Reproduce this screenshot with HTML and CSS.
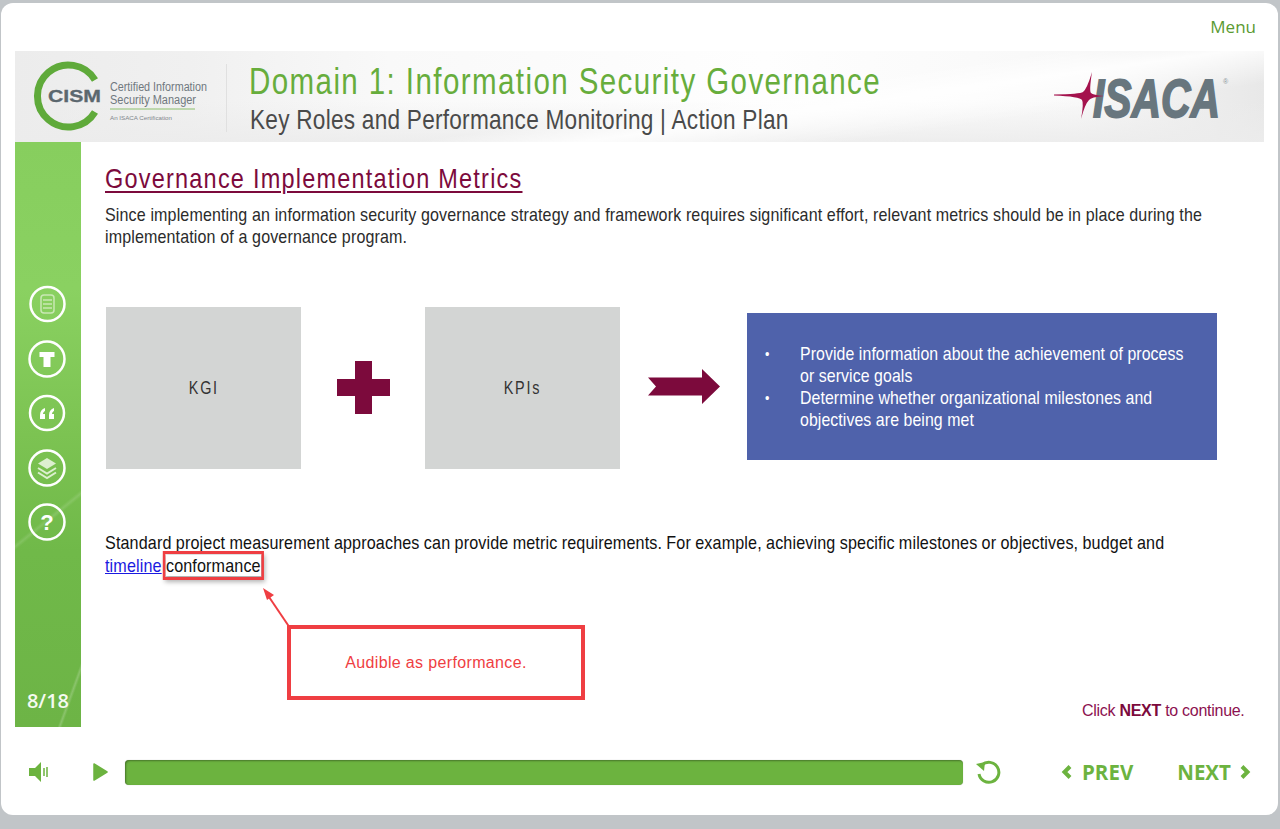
FILE: index.html
```html
<!DOCTYPE html>
<html lang="en">
<head>
    <meta charset="UTF-8">
    <meta name="viewport" content="width=device-width, initial-scale=1.0">
    <title>Governance Implementation Metrics</title>
    <link rel="stylesheet" href="styles.css">
</head>
<body>

    <div class="card">
        <div class="menu-row"><span class="menu">Menu</span></div>

        <!-- Banner -->
        <div class="banner">
            <svg class="cism-logo" width="180" height="91" viewBox="0 0 180 91">
                <path d="M 65 29 A 31 31 0 1 0 65 61" fill="none" stroke="#5faa3a" stroke-width="7"/>
                <text x="18" y="51" class="cism-word" textLength="53" lengthAdjust="spacingAndGlyphs">CISM</text>
                <text x="80" y="40" class="cism-line" textLength="97" lengthAdjust="spacingAndGlyphs">Certified Information</text>
                <text x="80" y="53" class="cism-line" textLength="86" lengthAdjust="spacingAndGlyphs">Security Manager</text>
                <line x1="80" y1="58" x2="165" y2="58" stroke="#8cbf6c" stroke-width="1"/>
                <text x="80" y="69" class="cism-small" textLength="62" lengthAdjust="spacingAndGlyphs">An ISACA Certification</text>
            </svg>
            <div class="banner-titles">
                <h1>Domain 1: Information Security Governance</h1>
                <p>Key Roles and Performance Monitoring | Action Plan</p>
            </div>
            <svg class="isaca-logo" width="176" height="50" viewBox="0 0 176 50">
                <text x="39" y="46" class="isaca-word" textLength="127" lengthAdjust="spacingAndGlyphs">ISACA</text>
                <text x="169" y="13" class="isaca-reg">®</text>
                <path d="M 0 23.500 Q 26 23 29 21 Q 33 18 38 1 Q 35 20 37 22 Q 39 24 50 25 Q 37 26 35 29 Q 31 33 27 48 Q 30 32 28 29 Q 26 25.500 0 24.500 Z" fill="#a4124d"/>
            </svg>
        </div>

        <div class="middle">
            <!-- Barra lateral -->
            <div class="sidebar">
                <svg class="side-icon" width="38" height="38" viewBox="0 0 38 38">
                    <circle cx="19.500" cy="19" r="17" class="ring"/>
                    <rect x="13" y="10" width="13" height="18" rx="3" fill="none" stroke="#c9e8b4" stroke-width="1.500"/>
                    <path d="M 15 15 H 24 M 15 19 H 24 M 15 23 H 24" stroke="#c9e8b4" stroke-width="1.500"/>
                </svg>
                <svg class="side-icon" width="38" height="38" viewBox="0 0 38 38">
                    <circle cx="19" cy="19" r="17.500" class="ring"/>
                    <path d="M 11.500 12 H 26.500 V 17 H 22.500 V 27 H 15.500 V 17 H 11.500 Z" fill="#fff"/>
                </svg>
                <svg class="side-icon" width="38" height="38" viewBox="0 0 38 38">
                    <circle cx="19" cy="19" r="17" class="ring"/>
                    <path d="M 17 14 C 14 15 12 17.500 12 21 V 25 H 17 V 20 H 15 C 15 18.500 16 17.500 17 17 Z M 26 14 C 23 15 21 17.500 21 21 V 25 H 26 V 20 H 24 C 24 18.500 25 17.500 26 17 Z" fill="#fff"/>
                </svg>
                <svg class="side-icon" width="38" height="38" viewBox="0 0 38 38">
                    <circle cx="19" cy="19" r="17.500" class="ring"/>
                    <path d="M 19 9 L 28 14.500 L 19 20 L 10 14.500 Z" fill="#dcefcf"/>
                    <path d="M 10 19 L 19 24.500 L 28 19 M 10 23.500 L 19 29 L 28 23.500" fill="none" stroke="#dcefcf" stroke-width="2"/>
                </svg>
                <svg class="side-icon" width="38" height="38" viewBox="0 0 38 38">
                    <circle cx="19" cy="19" r="17.500" class="ring"/>
                    <text x="19" y="27" class="help-mark">?</text>
                </svg>
                <div class="count">8/18</div>
            </div>

            <!-- Contenido -->
            <div class="content">
                <h2>Governance Implementation Metrics</h2>
                <p class="intro">Since implementing an information security governance strategy and framework requires significant effort, relevant metrics should be in place during the implementation of a governance program.</p>

                <div class="diagram">
                    <div class="grey-box"><span>KGI</span></div>
                    <svg class="plus" width="53" height="53" viewBox="0 0 53 53">
                        <path d="M 18 0 H 35 V 18 H 53 V 35 H 35 V 53 H 18 V 35 H 0 V 18 H 18 Z" fill="#7c0a3c"/>
                    </svg>
                    <div class="grey-box"><span>KPIs</span></div>
                    <svg class="arrow" width="72" height="35" viewBox="0 0 72 35">
                        <path d="M 0 8.500 H 54 V 0 L 72 17.500 L 54 35 V 26.500 H 0 L 8 17.500 Z" fill="#7c0a3c"/>
                    </svg>
                    <div class="blue-box">
                        <ul>
                            <li>Provide information about the achievement of process or service goals</li>
                            <li>Determine whether organizational milestones and objectives are being met</li>
                        </ul>
                    </div>
                </div>

                <p class="outro">Standard project measurement approaches can provide metric requirements. For example, achieving specific milestones or objectives, budget and <a href="#">timeline</a> <span class="flagged">conformance</span></p>

                <svg class="callout-line" width="40" height="50" viewBox="0 0 40 50">
                    <path d="M 29 42 L 6 8" stroke="#ef3e42" stroke-width="2"/>
                    <path d="M 2 2 L 13 9 L 6 14 Z" fill="#ef3e42"/>
                </svg>
                <div class="callout">Audible as performance.</div>
                <div class="next-hint">Click <b>NEXT</b> to continue.</div>
            </div>
        </div>

        <!-- Controles -->
        <div class="controls">
            <svg class="speaker" width="20" height="22" viewBox="0 0 20 22">
                <path d="M 0 7 H 6 L 12 1 V 21 L 6 15 H 0 Z" fill="#6cb33f"/>
                <path d="M 15 7 V 15 M 18 6 V 16" stroke="#6cb33f" stroke-width="1.500"/>
            </svg>
            <svg class="play" width="15" height="18" viewBox="0 0 15 18">
                <path d="M 1 1 L 14 9 L 1 17 Z" fill="#6cb33f" stroke="#6cb33f" stroke-width="1.500" stroke-linejoin="round"/>
            </svg>
            <div class="progress"></div>
            <svg class="reload" width="26" height="26" viewBox="0 0 26 26">
                <path d="M 7 6 A 10 10 0 1 1 4 15" fill="none" stroke="#6cb33f" stroke-width="3"/>
                <path d="M 1 5 L 10 3 L 9 12 Z" fill="#6cb33f"/>
            </svg>
            <div class="nav-btn prev">
                <svg width="11" height="14" viewBox="0 0 11 14"><path d="M 9 1.500 L 3.500 7 L 9 12.500" fill="none" stroke="#6cb33f" stroke-width="4"/></svg>
                PREV
            </div>
            <div class="nav-btn next">
                NEXT
                <svg width="11" height="14" viewBox="0 0 11 14"><path d="M 2 1.500 L 7.500 7 L 2 12.500" fill="none" stroke="#6cb33f" stroke-width="4"/></svg>
            </div>
        </div>
    </div>

</body>
</html>
```

FILE: styles.css
```css
/* Marco general */
html, body {
    margin: 0;
    padding: 0;
    height: 829px;
    overflow: hidden;
}
body {
    background-color: #c1c5c8;
    font-family: "Liberation Sans", Arial, sans-serif;
}
.card {
    margin: 3px 2px 0 1px;
    height: 812px;
    box-sizing: border-box;
    padding: 0 14px 0 14px;
    background-color: #fff;
    border-radius: 12px;
    display: flex;
    flex-direction: column;
}
.menu-row {
    height: 48px;
    display: flex;
    justify-content: flex-end;
    align-items: flex-start;
    padding-right: 8px;
}
.menu {
    margin-top: 13px;
    font-family: "Open Sans", sans-serif;
    font-size: 17px;
    line-height: 22px;
    color: #5a9a32;
}

/* Banner */
.banner {
    height: 91px;
    width: 1249px;
    flex: none;
    display: flex;
    position: relative;
    background:
        linear-gradient(172deg, rgba(255,255,255,0) 55%, rgba(255,255,255,0.85) 64%, rgba(255,255,255,0) 78%),
        linear-gradient(180deg, rgba(236,236,236,0) 55%, rgba(236,236,236,0.9) 100%),
        linear-gradient(90deg, #ececec 0%, #f0f0f0 14%, #f9f9f9 30%, #fefefe 60%, #f8f8f8 85%, #e8e8e8 100%);
}
.cism-logo {
    flex: none;
    margin-left: 15px;
    width: 180px;
}
.cism-word {
    font-weight: bold;
    font-size: 17px;
    fill: #5b676e;
    stroke: #5b676e;
    stroke-width: 0.300;
}
.cism-line {
    font-size: 12.500px;
    fill: #6f787e;
}
.cism-small {
    font-size: 5.500px;
    fill: #80878c;
}
.banner-titles {
    margin-left: 16px;
    margin-top: 13px;
    padding-left: 22px;
    height: 68px;
    border-left: 1px solid #e0e0e0;
}
.banner-titles h1 {
    margin: 0;
    font-size: 36px;
    line-height: 36px;
    font-weight: normal;
    letter-spacing: 1.720px;
    color: #67ad3c;
    white-space: nowrap;
    transform: scaleX(0.82);
    transform-origin: left;
}
.banner-titles p {
    margin: 4px 0 0 1px;
    font-size: 28px;
    line-height: 32px;
    letter-spacing: 0.300px;
    color: #4a4a4a;
    white-space: nowrap;
    transform: scaleX(0.808);
    transform-origin: left;
}
.isaca-logo {
    position: absolute;
    left: 1039px;
    top: 20px;
}
.isaca-word {
    font-weight: bold;
    font-style: italic;
    font-size: 53px;
    fill: #68767e;
    stroke: #68767e;
    stroke-width: 1.800;
}
.isaca-reg {
    font-size: 7px;
    fill: #8a959b;
}

/* Barra lateral */
.middle {
    height: 585px;
    flex: none;
    display: flex;
}
.sidebar {
    width: 66px;
    flex: none;
    display: flex;
    flex-direction: column;
    align-items: center;
    padding-top: 143px;
    box-sizing: border-box;
    background:
        linear-gradient(110deg, rgba(255,255,255,0) 91.500%, rgba(255,255,255,0.2) 92.300%, rgba(255,255,255,0) 93.200%),
        linear-gradient(141deg, rgba(255,255,255,0) 62.800%, rgba(255,255,255,0.12) 63.400%, rgba(255,255,255,0) 64%),
        linear-gradient(180deg, #87ce5e 0%, #8ad161 25%, #7cc352 50%, #70b949 70%, #6db446 100%);
}
.side-icon {
    display: block;
    margin: 0 3px 16.500px 0;
}
.ring {
    fill: none;
    stroke: #fff;
    stroke-width: 2.500;
}
.help-mark {
    font-weight: bold;
    font-size: 22px;
    text-anchor: middle;
    fill: #fff;
}
.count {
    margin-top: auto;
    margin-bottom: 13px;
    font-family: "Open Sans", sans-serif;
    font-weight: 600;
    font-size: 20px;
    line-height: 26px;
    color: #f6faf1;
}

/* Contenido */
.content {
    flex: 1;
    padding-left: 24px;
    position: relative;
    min-width: 0;
}
.content h2 {
    margin: 21px 0 0 0;
    font-size: 28px;
    line-height: 31px;
    font-weight: normal;
    letter-spacing: 1.450px;
    color: #7c0a3c;
    text-decoration: underline;
    text-decoration-thickness: 2px;
    text-underline-offset: 3px;
    white-space: nowrap;
    transform: scaleX(0.839);
    transform-origin: left;
}
.intro, .outro {
    margin: 0;
    width: 1306px;
    font-size: 19px;
    letter-spacing: 0.150px;
    color: #2b2b2b;
    transform-origin: left;
}
.intro {
    margin-top: 10px;
    line-height: 22px;
    transform: scaleX(0.845);
}
.diagram {
    margin: 59px 0 0 1px;
    height: 162px;
    display: flex;
    align-items: center;
}
.grey-box {
    width: 195px;
    height: 162px;
    flex: none;
    display: flex;
    align-items: center;
    justify-content: center;
    background-color: #d3d5d4;
    font-size: 18px;
    letter-spacing: 2.200px;
    color: #333;
}
.grey-box span {
    display: inline-block;
    transform: scaleX(0.8);
}
.plus {
    flex: none;
    margin: 0 35px 2px 36px;
}
.arrow {
    flex: none;
    margin: 0 27px 3px 28px;
}
.blue-box {
    margin: 0 0 3px 0;
    width: 470px;
    height: 147px;
    flex: none;
    box-sizing: border-box;
    padding: 30px 0 0 53px;
    background-color: #4f62ab;
    color: #fff;
}
.blue-box ul {
    margin: 0;
    padding: 0;
    width: 480px;
    font-size: 19px;
    line-height: 22px;
    letter-spacing: 0.100px;
    list-style: none;
    transform: scaleX(0.835);
    transform-origin: left;
}
.blue-box li {
    position: relative;
}
.blue-box li::before {
    content: "•";
    position: absolute;
    left: -42px;
    font-size: 15px;
}
.outro {
    margin-top: 63px;
    line-height: 22.500px;
    word-spacing: -0.400px;
    color: #111;
    transform: scaleX(0.85);
}
.outro a {
    color: #1a1ae0;
}
.flagged {
    outline: 3px solid #ef3e42;
    outline-offset: 1px;
    box-shadow: 2px 3px 5px 3px rgba(0, 0, 0, 0.3);
    background-color: #fff;
}

/* Anotación roja */
.callout {
    position: absolute;
    left: 206px;
    top: 483px;
    width: 298px;
    height: 75px;
    box-sizing: border-box;
    border: 4px solid #ef3e42;
    display: flex;
    align-items: center;
    justify-content: center;
    font-size: 16px;
    letter-spacing: 0.350px;
    color: #ef3e42;
}
.callout-line {
    position: absolute;
    left: 180px;
    top: 444px;
}
.next-hint {
    position: absolute;
    left: 1001px;
    top: 559px;
    font-size: 16px;
    line-height: 20px;
    letter-spacing: -0.280px;
    color: #8c1150;
    white-space: nowrap;
}
.next-hint b {
    color: #7c0a3c;
}

/* Controles */
.controls {
    height: 88px;
    box-sizing: border-box;
    padding-top: 4px;
    display: flex;
    align-items: center;
    margin-top: -1px;
}
.speaker {
    margin-left: 14px;
    flex: none;
}
.play {
    margin-left: 44px;
    flex: none;
}
.progress {
    width: 838px;
    height: 25px;
    margin-left: 17px;
    flex: none;
    box-sizing: border-box;
    background-color: #6cb33f;
    border-radius: 4px;
    box-shadow: inset 1px 1px 2px rgba(0, 0, 0, 0.35), 0 0 1px rgba(0, 0, 0, 0.3);
}
.reload {
    margin-left: 12px;
    flex: none;
}
.nav-btn {
    flex: none;
    display: flex;
    align-items: center;
    gap: 10px;
    font-family: "Open Sans", sans-serif;
    font-weight: 700;
    font-size: 20.500px;
    color: #6cb33f;
}
.prev {
    margin-left: 60px;
}
.next {
    margin-left: 44px;
    gap: 9px;
}
```
